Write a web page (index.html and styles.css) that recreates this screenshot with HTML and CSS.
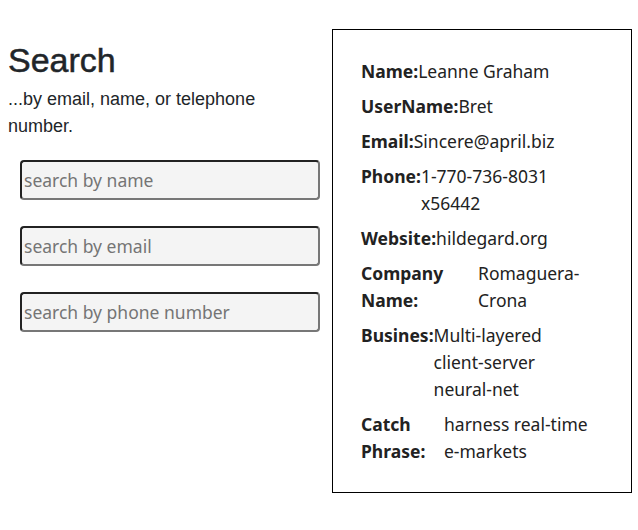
FILE: index.html
```html
<!DOCTYPE html>
<html>
<head>
<meta charset="utf-8">
<link rel="stylesheet" href="styles.css">
</head>
<body>
<div class="page">
  <div class="search">
    <h1 class="title">Search</h1>
    <p class="lead">...by email, name, or telephone number.</p>
    <div class="fields">
      <input class="field" type="text" placeholder="search by name">
      <input class="field" type="text" placeholder="search by email">
      <input class="field" type="text" placeholder="search by phone number">
    </div>
  </div>
  <div class="card">
    <div class="row"><span class="label">Name:</span><span class="value">Leanne Graham</span></div>
    <div class="row"><span class="label">UserName:</span><span class="value">Bret</span></div>
    <div class="row"><span class="label">Email:</span><span class="value">Sincere@april.biz</span></div>
    <div class="row"><span class="label">Phone:</span><span class="value">1-770-736-8031 x56442</span></div>
    <div class="row"><span class="label">Website:</span><span class="value">hildegard.org</span></div>
    <div class="row"><span class="label label-company">Company Name:</span><span class="value">Romaguera-Crona</span></div>
    <div class="row"><span class="label">Busines:</span><span class="value">Multi-layered client-server neural-net</span></div>
    <div class="row"><span class="label label-catch">Catch Phrase:</span><span class="value">harness real-time e-markets</span></div>
  </div>
</div>
</body>
</html>
```
FILE: styles.css
```css
body {
  margin: 8px 0 8px 8px;
  font-family: "Liberation Sans", Arial, sans-serif;
  color: #212529;
  background: #fff;
}
.page {
  display: flex;
  align-items: flex-start;
  gap: 12px;
  margin-top: 21px;
}
.search {
  width: 312px;
  flex: none;
}
.title {
  margin: 11px 0 5px;
  font-size: 34px;
  line-height: 1.2;
  font-weight: 400;
  -webkit-text-stroke: 0.5px #212529;
}
.lead {
  margin: 0 0 20px;
  font-size: 18px;
  line-height: 27px;
  padding-right: 40px;
}
.fields {
  display: flex;
  flex-direction: column;
  gap: 26px;
  padding-left: 12px;
}
.field {
  box-sizing: border-box;
  width: 300px;
  height: 40px;
  margin: 0;
  padding: 0 2px;
  border: 2px solid;
  border-color: #222 #777 #777 #222;
  border-radius: 4px;
  background: #f4f4f4;
  font-family: "Noto Sans", sans-serif;
  font-size: 17.5px;
  color: #222;
}
.field::placeholder {
  color: #757575;
}
.card {
  box-sizing: border-box;
  width: 300px;
  flex: none;
  border: 1px solid #000;
  padding: 28px 39px 27px 28px;
  display: flex;
  flex-direction: column;
  gap: 8px;
  font-family: "Noto Sans", sans-serif;
  font-size: 17.5px;
  line-height: 27px;
  color: #222;
}
.row {
  display: flex;
}
.label {
  flex: none;
  font-weight: 700;
}
.label-company {
  width: 117px;
}
.label-catch {
  width: 83px;
}
.value {
  flex: 1;
  min-width: 0;
}
```
